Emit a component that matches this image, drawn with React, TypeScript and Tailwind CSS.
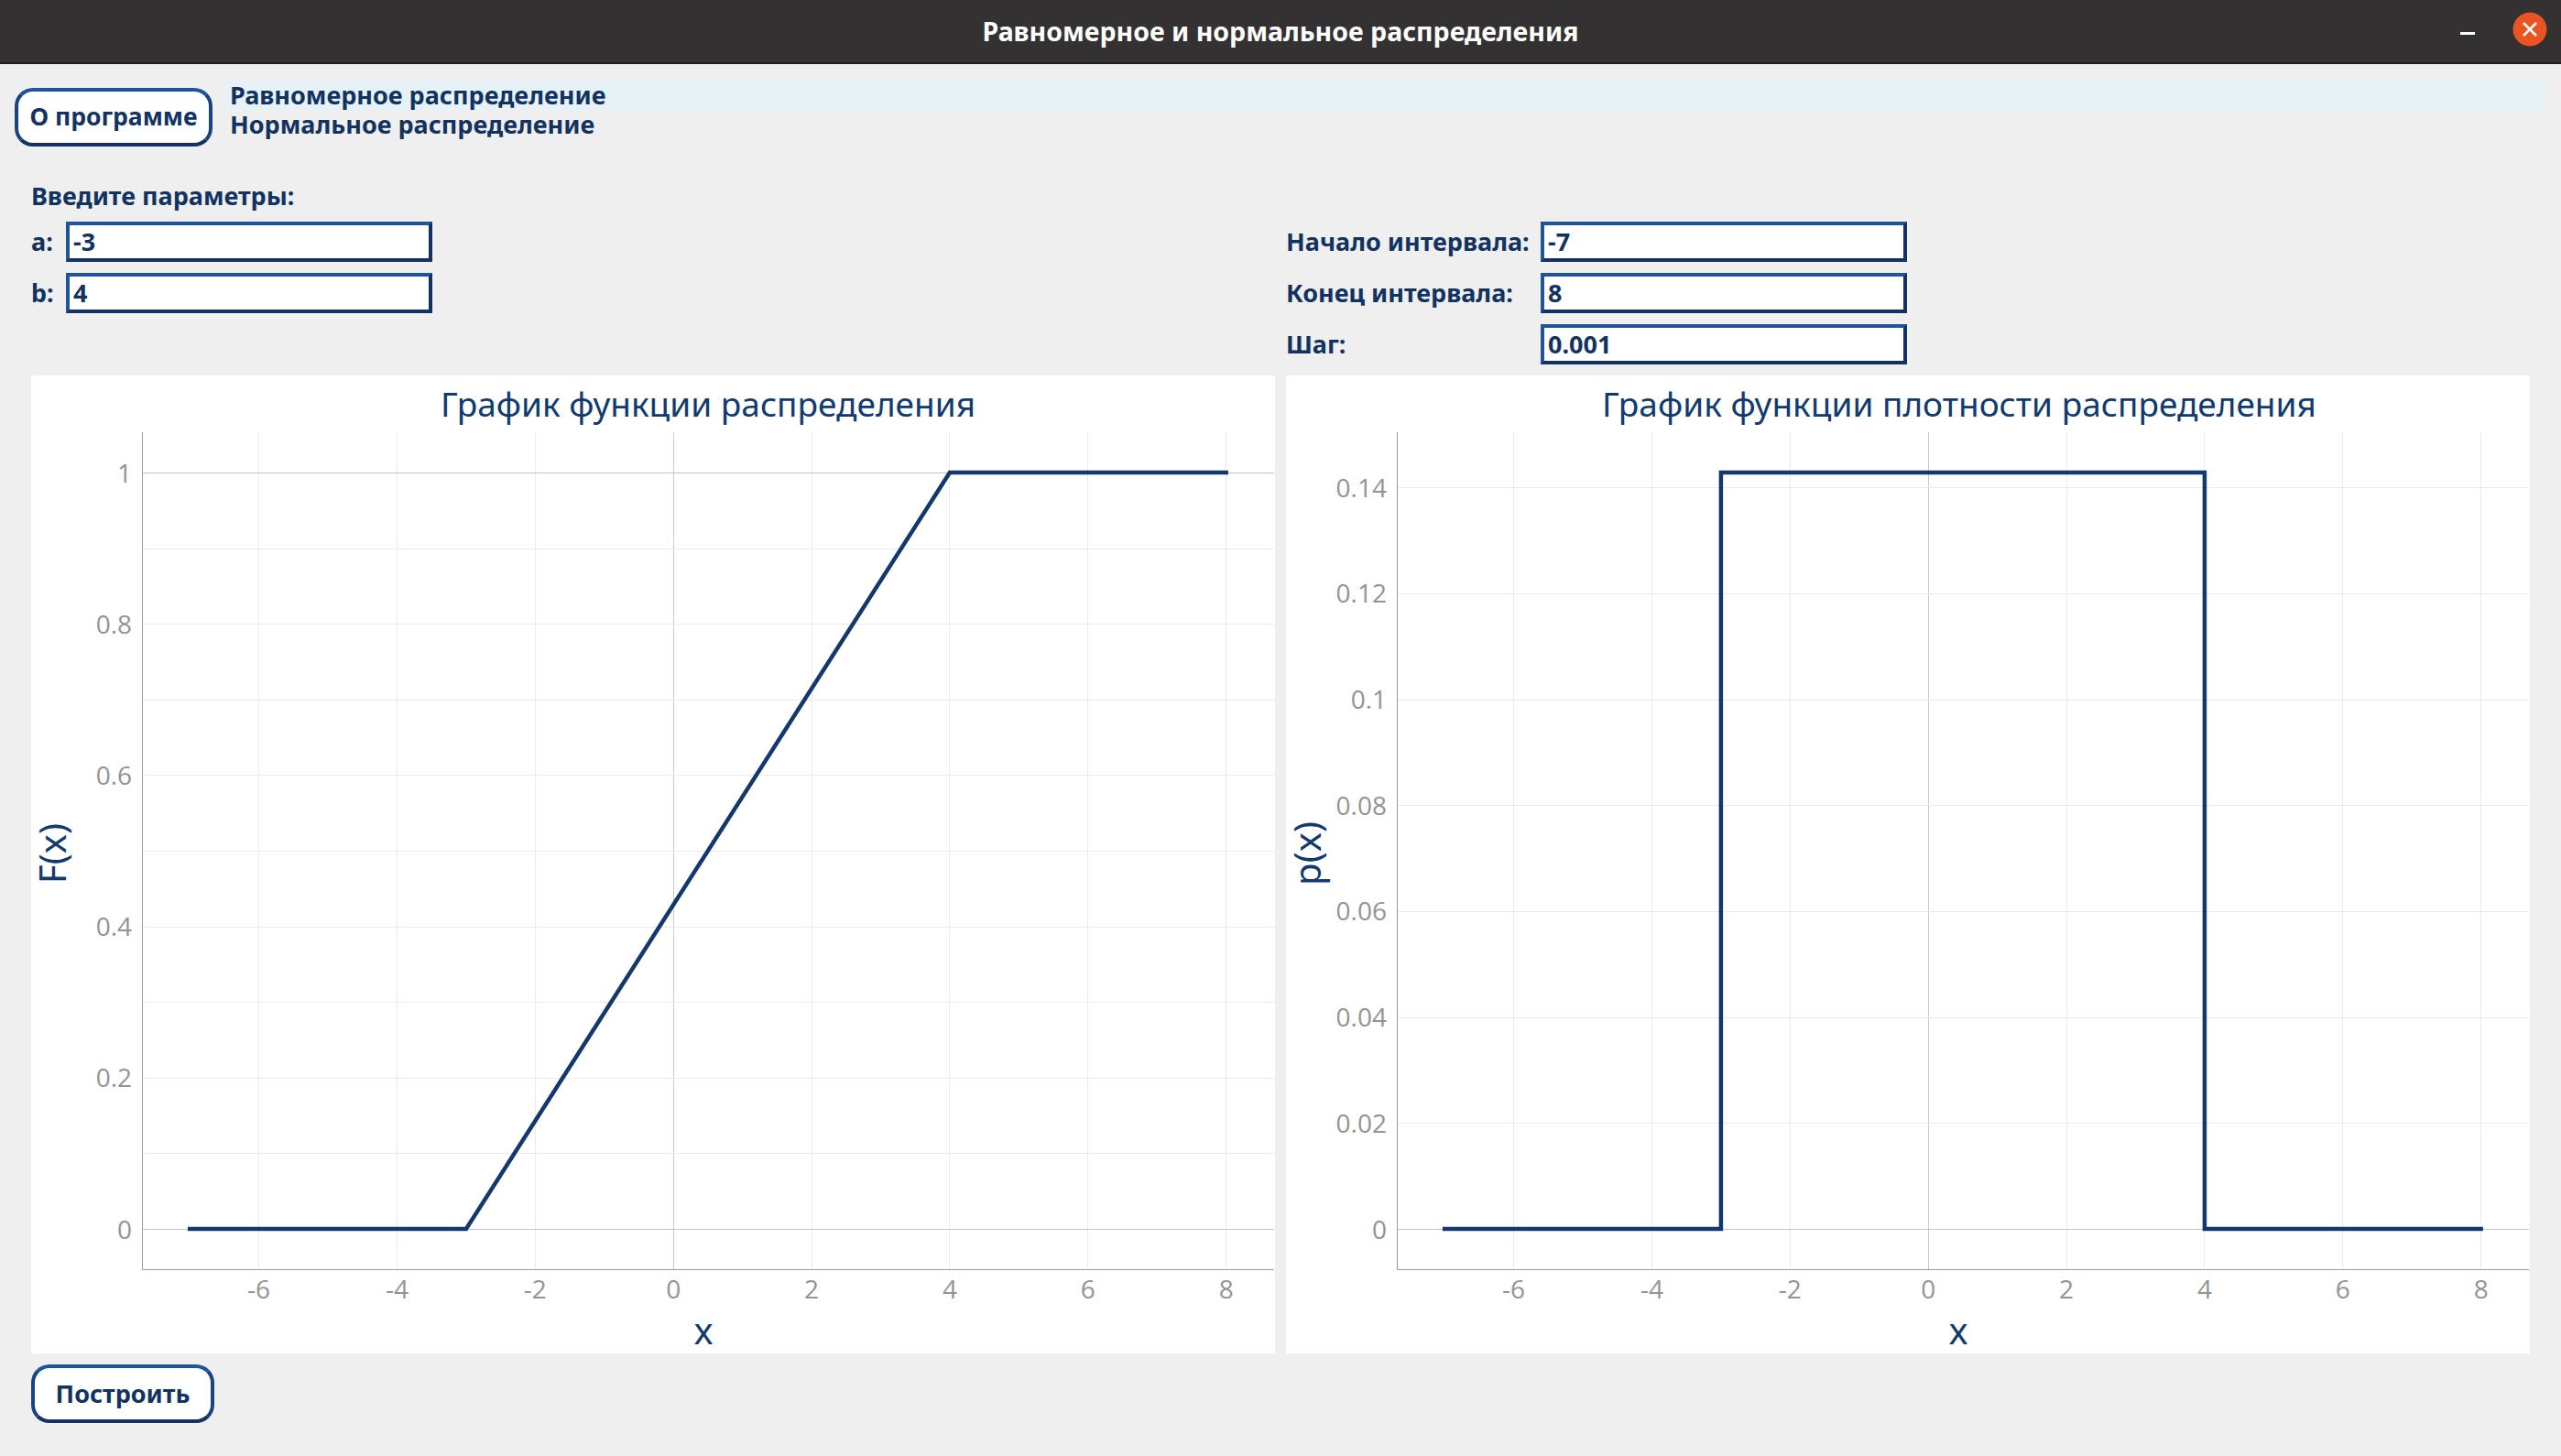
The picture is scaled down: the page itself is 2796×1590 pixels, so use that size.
import React from "react";

const X = (v: number) => 701.2 + 75.43 * v;

function Chart({ title, titleX, yLabel, yTicks, hGrid, curve }: {
  title: string;
  titleX: number;
  yLabel: string;
  yTicks: { label: string; y: number }[];
  hGrid: { y: number; strong?: boolean }[];
  curve: string;
}) {
  const xs = [-6, -4, -2, 0, 2, 4, 6, 8];
  return (
    <svg width="1358" height="1068" className="block overflow-visible bg-white font-normal">
      {xs.map((v) => {
        const px = Math.floor(X(v)) + 0.5;
        return <line key={v} x1={px} x2={px} y1={62} y2={976} stroke={v === 0 ? "#cccccc" : "#ebebeb"} strokeWidth={1} />;
      })}
      {hGrid.map((g) => (
        <line key={g.y} x1={122} x2={1357} y1={Math.floor(g.y) + 0.5} y2={Math.floor(g.y) + 0.5} stroke={g.strong ? "#c4c4c4" : "#ebebeb"} strokeWidth={1} />
      ))}
      <line x1={121.5} x2={121.5} y1={62} y2={976} stroke="#999999" strokeWidth={1} />
      <line x1={121} x2={1357} y1={976.5} y2={976.5} stroke="#999999" strokeWidth={1} />
      <path d={curve} fill="none" stroke="#13386b" strokeWidth={4.5} strokeLinejoin="miter" strokeLinecap="square" />
      {yTicks.map((t) => (
        <text key={t.label} x={110} y={t.y + 10} textAnchor="end" fill="#939393" className="font-['Open_Sans',sans-serif] text-[28px]">{t.label}</text>
      ))}
      {xs.map((v) => (
        <text key={v} x={X(v)} y={1008} textAnchor="middle" fill="#939393" className="font-['Open_Sans',sans-serif] text-[28px]">{v}</text>
      ))}
      <text x={titleX} y={45} textAnchor="middle" fill="#123a6e" className="font-['Noto_Sans',sans-serif] text-[37px]">{title}</text>
      <text x={734} y={1058} textAnchor="middle" fill="#123a6e" className="font-['Noto_Sans',sans-serif] text-[40px]">x</text>
      <text transform="translate(38 522) rotate(-90)" textAnchor="middle" fill="#123a6e" className="font-['Noto_Sans',sans-serif] text-[40px]">{yLabel}</text>
    </svg>
  );
}

function Field({ label, value, labelWidth }: { label: string; value: string; labelWidth: string }) {
  return (
    <div className="flex h-[44px] items-center">
      <span className={labelWidth}>{label}</span>
      <div className="flex h-[44px] w-[400px] items-center border-4 border-t-[#1f5496] border-l-[#1f5496] border-r-[#12325f] border-b-[#12325f] bg-white pl-[4px]">{value}</div>
    </div>
  );
}

export default function App() {
  const leftYTicks = [1, 0.8, 0.6, 0.4, 0.2, 0].map((v) => ({ label: String(v), y: 932.5 - v * 826 }));
  const leftGrid = [0, 0.1, 0.2, 0.3, 0.4, 0.5, 0.6, 0.7, 0.8, 0.9, 1].map((v) => ({ y: 932.5 - v * 826, strong: v === 0 || v === 1 }));
  const rightVals = [0.14, 0.12, 0.1, 0.08, 0.06, 0.04, 0.02, 0];
  const rightYTicks = rightVals.map((v) => ({ label: String(v), y: 932.5 - v * 5785 }));
  const rightGrid = rightVals.map((v) => ({ y: 932.5 - v * 5785, strong: v === 0 }));
  const leftCurve = `M${X(-7)} 932 L${X(-3)} 932 L${X(4)} 106 L${X(8)} 106`;
  const rightCurve = `M${X(-7)} 932 L${X(-3)} 932 L${X(-3)} 106 L${X(4)} 106 L${X(4)} 932 L${X(8)} 932`;

  return (
    <div className="h-[1590px] w-[2796px] overflow-hidden bg-[#efefef] font-['Noto_Sans',sans-serif] text-[27px] font-bold text-[#12325f]">
      <header className="relative flex h-[70px] items-center justify-center border-b-2 border-b-[#1c1c1c] bg-[#333131] text-[28.5px] text-white">
        <span>Равномерное и нормальное распределения</span>
        <svg width="16" height="4" className="absolute left-[2686px] top-[35px]"><rect width="16" height="3" fill="#ffffff" /></svg>
        <svg width="38" height="38" viewBox="0 0 38 38" className="absolute left-[2743px] top-[13px]">
          <circle cx="19" cy="19" r="18.5" fill="#e95420" />
          <path d="M12 12 L26 26 M26 12 L12 26" stroke="#ffffff" strokeWidth="2.5" />
        </svg>
      </header>

      <div className="flex items-start gap-3 pl-4 pr-4 pt-[18px]">
        <button className="mt-[8px] h-[64px] w-[216px] rounded-[20px] border-4 border-t-[#1f5496] border-x-[#18447f] border-b-[#12325f] bg-white text-[26.5px]">О программе</button>
        <div className="flex-1">
          <div className="flex h-[32px] items-center bg-[#e6f2f8] pl-[7px]">Равномерное распределение</div>
          <div className="flex h-[32px] items-center pl-[7px]">Нормальное распределение</div>
        </div>
      </div>

      <div className="grid grid-cols-[1358px_1358px] gap-x-3 px-[34px] pt-[38px]">
        <div className="flex flex-col gap-3">
          <div className="flex h-[32px] items-center">Введите параметры:</div>
          <Field label="a:" value="-3" labelWidth="w-[38px]" />
          <Field label="b:" value="4" labelWidth="w-[38px]" />
        </div>
        <div className="flex flex-col gap-3 pt-[44px]">
          <Field label="Начало интервала:" value="-7" labelWidth="w-[278px]" />
          <Field label="Конец интервала:" value="8" labelWidth="w-[278px]" />
          <Field label="Шаг:" value="0.001" labelWidth="w-[278px]" />
        </div>
      </div>

      <div className="grid grid-cols-[1358px_1358px] gap-x-3 px-[34px] pt-3">
        <Chart title="График функции распределения" titleX={739} yLabel="F(x)" yTicks={leftYTicks} hGrid={leftGrid} curve={leftCurve} />
        <Chart title="График функции плотности распределения" titleX={735} yLabel="p(x)" yTicks={rightYTicks} hGrid={rightGrid} curve={rightCurve} />
      </div>

      <div className="px-[34px] pt-3">
        <button className="h-[64px] w-[200px] rounded-[20px] border-4 border-t-[#1f5496] border-x-[#18447f] border-b-[#12325f] bg-white">Построить</button>
      </div>
    </div>
  );
}
